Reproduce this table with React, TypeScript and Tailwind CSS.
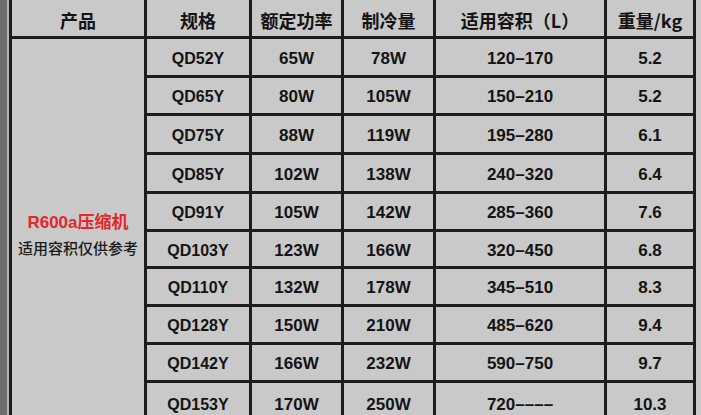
import React from "react";

type Row = {
    model: string;
    power: string;
    cooling: string;
    volume: string;
    weight: string;
};

const rows: Row[] = [
    { model: "QD52Y", power: "65W", cooling: "78W", volume: "120–170", weight: "5.2" },
    { model: "QD65Y", power: "80W", cooling: "105W", volume: "150–210", weight: "5.2" },
    { model: "QD75Y", power: "88W", cooling: "119W", volume: "195–280", weight: "6.1" },
    { model: "QD85Y", power: "102W", cooling: "138W", volume: "240–320", weight: "6.4" },
    { model: "QD91Y", power: "105W", cooling: "142W", volume: "285–360", weight: "7.6" },
    { model: "QD103Y", power: "123W", cooling: "166W", volume: "320–450", weight: "6.8" },
    { model: "QD110Y", power: "132W", cooling: "178W", volume: "345–510", weight: "8.3" },
    { model: "QD128Y", power: "150W", cooling: "210W", volume: "485–620", weight: "9.4" },
    { model: "QD142Y", power: "166W", cooling: "232W", volume: "590–750", weight: "9.7" },
    { model: "QD153Y", power: "170W", cooling: "250W", volume: "720––––", weight: "10.3" },
];

const headers = ["规格", "额定功率", "制冷量", "适用容积（L）", "重量/kg"];

const cell =
    "bg-[#c9c9c9] flex items-center justify-center text-[#141414] font-bold";

export default function App() {
    return (
        <div className="flex h-[415px] w-[701px] overflow-hidden bg-[#c9c9c9] font-['Liberation_Sans','Noto_Sans_CJK_SC',sans-serif]">
            {/* left edge */}
            <div className="w-[7px] shrink-0 bg-[#6d6d6d]" />
            <div className="w-[2px] shrink-0 bg-[#b4b4b4]" />

            {/* table */}
            <div className="grid shrink-0 grid-cols-[132px_102px_89px_89px_168px_86px] grid-rows-[36px_36px_35px_36px_36px_35px_34px_35px_35px_35px_40px] gap-[3px] border-x-[3px] border-[#1c1c1c] bg-[#1c1c1c]">
                {/* Header */}
                <div className={`${cell} pt-1 text-[18px] font-['Noto_Sans_CJK_SC',sans-serif]`}>
                    产品
                </div>
                {headers.map((h) => (
                    <div
                        key={h}
                        className={`${cell} pt-1 text-[18px] font-['Noto_Sans_CJK_SC',sans-serif]`}
                    >
                        {h}
                    </div>
                ))}

                {/* Merged product cell */}
                <div className="row-span-10 flex flex-col items-center bg-[#c9c9c9] pt-[172px]">
                    <div className="text-[17px] leading-[24px] font-bold text-[#e5262b]">
                        R600a压缩机
                    </div>
                    <div className="mt-[3px] text-[15px] leading-[20px] font-medium text-[#1a1a1a] font-['Noto_Sans_CJK_SC',sans-serif]">
                        适用容积仅供参考
                    </div>
                </div>

                {rows.map((r) => (
                    <React.Fragment key={r.model}>
                        <div className={`${cell} pt-[3px] text-[16px]`}>{r.model}</div>
                        <div className={`${cell} pt-[3px] text-[17px]`}>{r.power}</div>
                        <div className={`${cell} pt-[3px] text-[17px]`}>{r.cooling}</div>
                        <div className={`${cell} pt-[3px] text-[17px]`}>{r.volume}</div>
                        <div className={`${cell} pt-[3px] text-[17px]`}>{r.weight}</div>
                    </React.Fragment>
                ))}
            </div>

            {/* right edge */}
            <div className="flex-1 bg-[#c9c9c9]" />
        </div>
    );
}
